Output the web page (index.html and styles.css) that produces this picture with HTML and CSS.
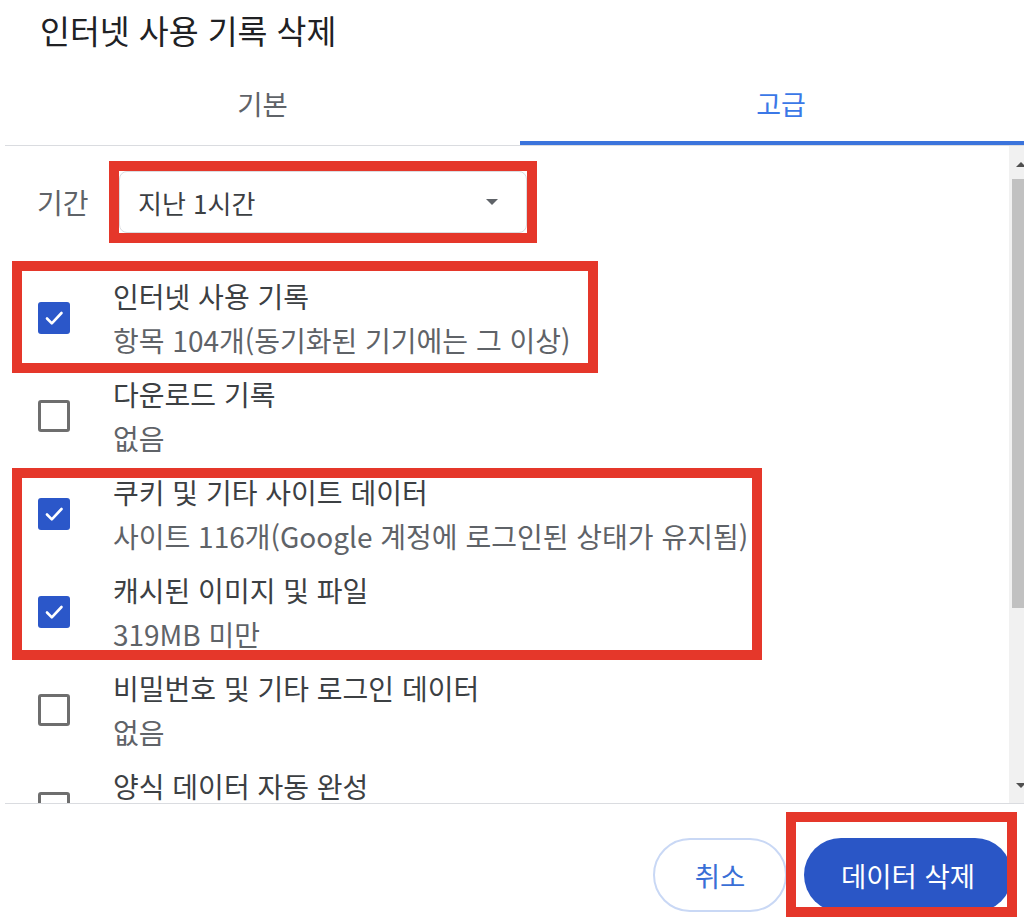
FILE: index.html
```html
<!DOCTYPE html>
<html lang="ko">
<head>
<meta charset="utf-8">
<title>인터넷 사용 기록 삭제</title>
<link rel="stylesheet" href="styles.css">
</head>
<body>
<div class="dialog">
  <h1 class="title">인터넷 사용 기록 삭제</h1>
  <div class="tabs">
    <div class="tab">기본</div>
    <div class="tab tab-active">고급</div>
  </div>
  <div class="content">
    <div class="list">
      <div class="period">
        <span class="period-label">기간</span>
        <div class="mark mark-select">
          <div class="select">
            <span class="select-text">지난 1시간</span>
            <span class="caret"></span>
          </div>
        </div>
      </div>

      <div class="mark mark-a">
        <div class="row">
          <span class="box box-checked"><svg viewBox="0 0 32 32" width="32" height="32"><polyline points="9,16.5 13.8,21.3 23.5,11" fill="none" stroke="#fff" stroke-width="2.6" stroke-linecap="round" stroke-linejoin="round"/></svg></span>
          <div class="texts">
            <div class="label">인터넷 사용 기록</div>
            <div class="sub">항목 104개(동기화된 기기에는 그 이상)</div>
          </div>
        </div>
      </div>

      <div class="row">
        <span class="box"></span>
        <div class="texts">
          <div class="label">다운로드 기록</div>
          <div class="sub">없음</div>
        </div>
      </div>

      <div class="mark mark-b">
        <div class="row">
          <span class="box box-checked"><svg viewBox="0 0 32 32" width="32" height="32"><polyline points="9,16.5 13.8,21.3 23.5,11" fill="none" stroke="#fff" stroke-width="2.6" stroke-linecap="round" stroke-linejoin="round"/></svg></span>
          <div class="texts">
            <div class="label">쿠키 및 기타 사이트 데이터</div>
            <div class="sub">사이트 116개(Google 계정에 로그인된 상태가 유지됨)</div>
          </div>
        </div>
        <div class="row">
          <span class="box box-checked"><svg viewBox="0 0 32 32" width="32" height="32"><polyline points="9,16.5 13.8,21.3 23.5,11" fill="none" stroke="#fff" stroke-width="2.6" stroke-linecap="round" stroke-linejoin="round"/></svg></span>
          <div class="texts">
            <div class="label">캐시된 이미지 및 파일</div>
            <div class="sub">319MB 미만</div>
          </div>
        </div>
      </div>

      <div class="row">
        <span class="box"></span>
        <div class="texts">
          <div class="label">비밀번호 및 기타 로그인 데이터</div>
          <div class="sub">없음</div>
        </div>
      </div>

      <div class="row">
        <span class="box"></span>
        <div class="texts">
          <div class="label">양식 데이터 자동 완성</div>
          <div class="sub">없음</div>
        </div>
      </div>
    </div>

    <div class="scrollbar">
      <div class="sb-button"><span class="sb-arrow sb-up"></span></div>
      <div class="sb-track">
        <div class="sb-thumb"></div>
      </div>
      <div class="sb-button"><span class="sb-arrow sb-down"></span></div>
    </div>
  </div>

  <div class="footer">
    <button class="btn btn-cancel">취소</button>
    <button class="btn btn-delete">데이터 삭제</button>
  </div>
</div>
</body>
</html>
```

FILE: styles.css
```css
*, *::before, *::after { box-sizing: border-box; }

html, body {
  margin: 0;
  padding: 0;
  background: #ffffff;
}

body {
  width: 1024px;
  height: 923px;
  overflow: hidden;
  font-family: "Noto Sans CJK KR", "Noto Sans", sans-serif;
  color: #3c4043;
}

.dialog {
  display: flex;
  flex-direction: column;
  height: 923px;
}

.title {
  margin: 0;
  padding: 9px 0 0 40px;
  height: 51px;
  font-size: 32.5px;
  line-height: 42px;
  font-weight: 400;
  color: #202124;
}

.tabs {
  display: flex;
  height: 95px;
  margin-left: 5px;
  border-bottom: 1px solid #dadce0;
}

.tab {
  display: flex;
  align-items: center;
  justify-content: center;
  width: 515px;
  padding-top: 10px;
  font-size: 27.5px;
  color: #5f6368;
}

.tab-active {
  flex: 1;
  width: auto;
  padding-left: 18px;
  font-size: 27px;
  color: #3b78e7;
  box-shadow: inset 0 -4px 0 #3b74dc;
}

.content {
  display: flex;
  height: 657px;
}

.list {
  flex: 1;
  overflow: hidden;
}

.period {
  display: flex;
  align-items: center;
  padding: 25px 0 36px 37px;
}

.period-label {
  width: 82px;
  font-size: 28px;
  line-height: 62px;
  color: #5f6368;
}

.select {
  display: flex;
  align-items: center;
  justify-content: space-between;
  width: 408px;
  height: 62px;
  padding: 0 28px 0 18px;
  border: 1px solid #dadce0;
  border-radius: 8px;
  font-size: 26px;
  color: #3c4043;
}

.caret {
  width: 0;
  height: 0;
  border-left: 6px solid transparent;
  border-right: 6px solid transparent;
  border-top: 6px solid #5f6368;
}

.row {
  display: flex;
  align-items: center;
  height: 98px;
  padding-left: 38px;
}

.box {
  flex: none;
  width: 32px;
  height: 32px;
  border: 3px solid #6e6e6e;
  border-radius: 3px;
  margin-right: 43px;
}

.box-checked {
  border: none;
  background: #2b57c9;
}

.box svg {
  display: block;
}

.texts {
  display: flex;
  flex-direction: column;
}

.label {
  font-size: 28px;
  line-height: 44px;
  color: #3c4043;
  white-space: nowrap;
}

.sub {
  font-size: 28px;
  line-height: 44px;
  color: #5f6368;
  white-space: nowrap;
}

.mark {
  position: relative;
}

.mark::after {
  content: "";
  position: absolute;
  border: 10px solid #e5372a;
  pointer-events: none;
}

.mark-select::after {
  top: -10px;
  left: -10px;
  right: -10px;
  bottom: -10px;
}

.mark-a::after {
  top: -8px;
  left: 12px;
  width: 586px;
  height: 112px;
}

.mark-b::after {
  top: 3px;
  left: 12px;
  width: 750px;
  height: 192px;
}

.scrollbar {
  display: flex;
  flex-direction: column;
  width: 15px;
  background: #f1f1f1;
}

.sb-button {
  display: flex;
  align-items: center;
  justify-content: flex-end;
  height: 32px;
}

.sb-arrow {
  width: 0;
  height: 0;
  border-left: 5px solid transparent;
  border-right: 5px solid transparent;
  margin-right: -2px;
}

.sb-up {
  border-bottom: 5px solid #505050;
  margin-top: 4px;
}

.sb-down {
  border-top: 5px solid #505050;
  margin-top: -3px;
}

.sb-track {
  flex: 1;
  padding: 1px 0 0 3px;
}

.sb-thumb {
  height: 429px;
  background: #c1c1c1;
}

.footer {
  flex: 1;
  display: flex;
  justify-content: flex-end;
  align-items: flex-start;
  gap: 17px;
  margin-left: 5px;
  padding: 34px 12px 0 0;
  border-top: 1px solid #dadce0;
}

.btn {
  height: 74px;
  border-radius: 37px;
  font-family: "Noto Sans CJK KR", "Noto Sans", sans-serif;
  font-size: 27.5px;
  padding: 0;
  cursor: pointer;
}

.btn-cancel {
  width: 134px;
  background: #ffffff;
  border: 2px solid #c9d8f5;
  color: #3a6fd6;
}

.btn-delete {
  position: relative;
  width: 208px;
  background: #2a56c6;
  border: none;
  color: #ffffff;
}

.btn-delete::after {
  content: "";
  position: absolute;
  top: -26px;
  left: -18px;
  width: 231px;
  height: 105px;
  border: 10px solid #e5372a;
  pointer-events: none;
}
```
